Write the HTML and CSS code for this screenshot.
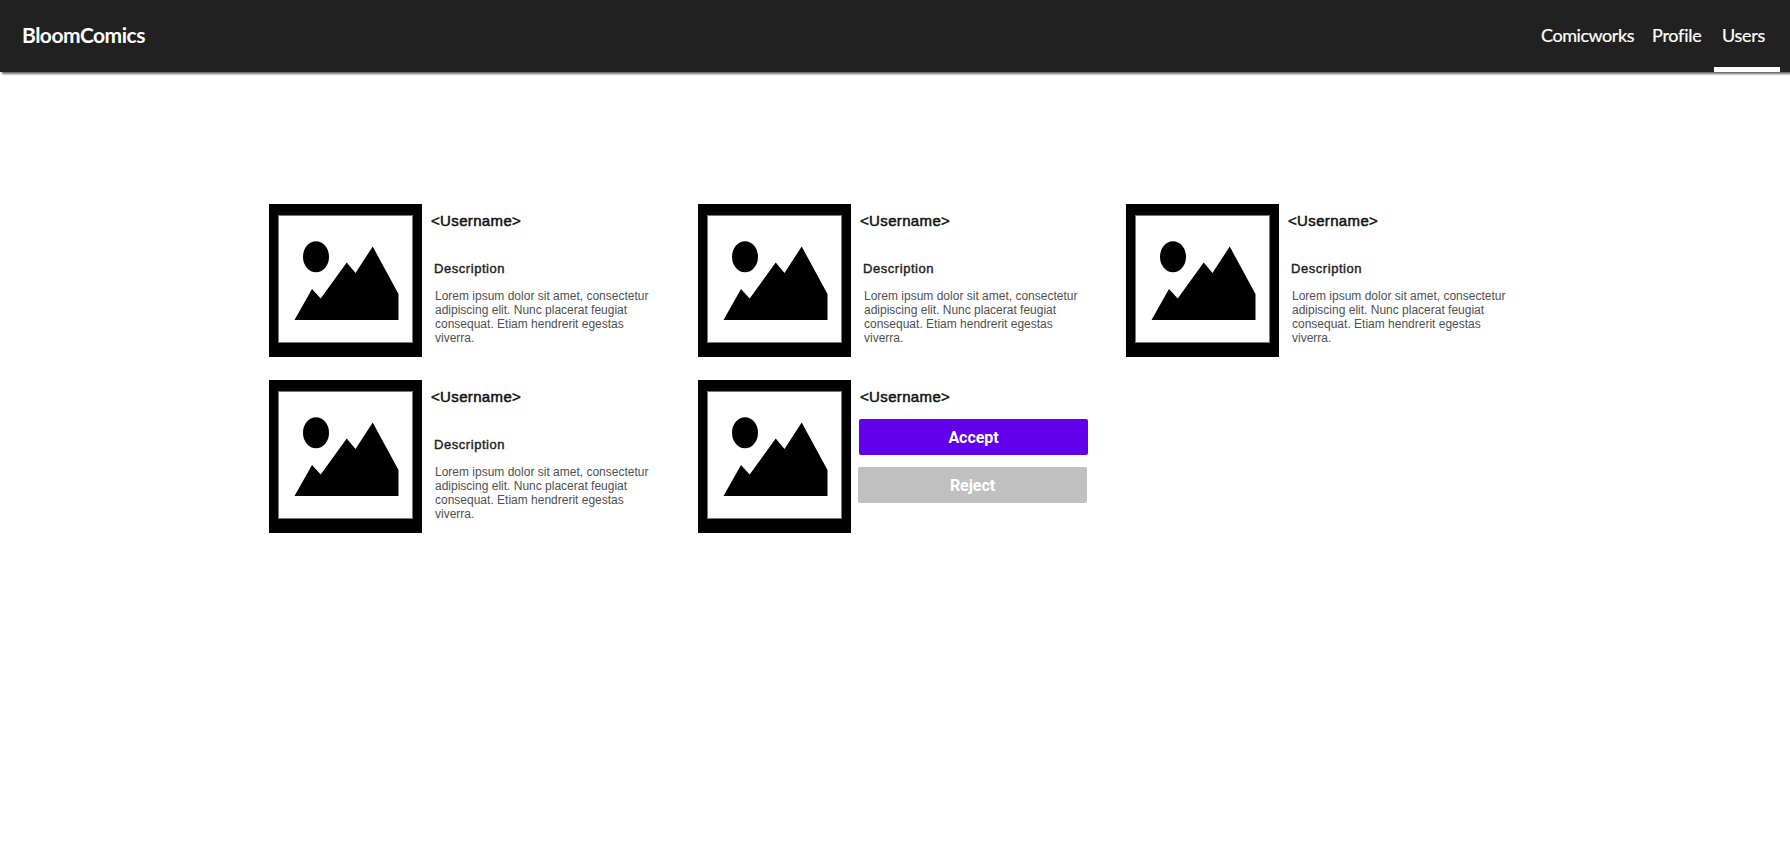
FILE: index.html
```html
<!DOCTYPE html>
<html lang="en">
<head>
<meta charset="utf-8">
<title>BloomComics</title>
<link rel="stylesheet" href="styles.css">
</head>
<body>
<svg width="0" height="0" class="defs">
  <symbol id="picture" viewBox="0 0 153 153">
    <rect width="153" height="153" fill="#000"/>
    <rect x="9.5" y="11.5" width="134" height="127" fill="#fff" stroke="#777"/>
    <ellipse cx="47" cy="52.7" rx="13" ry="15.5"/>
    <path d="M25.5 116 43 85 51.7 94.5 77.7 58.5 86.5 69 103.7 42.5 129.5 90V116Z"/>
  </symbol>
</svg>
<header class="topbar">
  <div class="logo">BloomComics</div>
  <nav class="nav">
    <a class="link works">Comicworks</a>
    <a class="link profile">Profile</a>
    <a class="link users active">Users</a>
  </nav>
</header>
<main class="grid">
  <article class="card">
    <svg class="thumb"><use href="#picture"/></svg>
    <div class="info">
      <h2 class="name">&lt;Username&gt;</h2>
      <h3 class="label">Description</h3>
      <p class="text">Lorem ipsum dolor sit amet, consectetur<br>adipiscing elit. Nunc placerat feugiat<br>consequat. Etiam hendrerit egestas<br>viverra.</p>
    </div>
  </article>
  <article class="card">
    <svg class="thumb"><use href="#picture"/></svg>
    <div class="info">
      <h2 class="name">&lt;Username&gt;</h2>
      <h3 class="label">Description</h3>
      <p class="text">Lorem ipsum dolor sit amet, consectetur<br>adipiscing elit. Nunc placerat feugiat<br>consequat. Etiam hendrerit egestas<br>viverra.</p>
    </div>
  </article>
  <article class="card">
    <svg class="thumb"><use href="#picture"/></svg>
    <div class="info">
      <h2 class="name">&lt;Username&gt;</h2>
      <h3 class="label">Description</h3>
      <p class="text">Lorem ipsum dolor sit amet, consectetur<br>adipiscing elit. Nunc placerat feugiat<br>consequat. Etiam hendrerit egestas<br>viverra.</p>
    </div>
  </article>
  <article class="card">
    <svg class="thumb"><use href="#picture"/></svg>
    <div class="info">
      <h2 class="name">&lt;Username&gt;</h2>
      <h3 class="label">Description</h3>
      <p class="text">Lorem ipsum dolor sit amet, consectetur<br>adipiscing elit. Nunc placerat feugiat<br>consequat. Etiam hendrerit egestas<br>viverra.</p>
    </div>
  </article>
  <article class="card">
    <svg class="thumb"><use href="#picture"/></svg>
    <div class="info">
      <h2 class="name">&lt;Username&gt;</h2>
      <button class="btn accept">Accept</button>
      <button class="btn reject">Reject</button>
    </div>
  </article>
</main>
</body>
</html>
```
FILE: styles.css
```css
* { box-sizing: border-box; }
body { margin: 0; background: #fff; font-family: "Liberation Sans", Arial, sans-serif; }
.defs { display: block; }
.topbar {
  display: flex; justify-content: space-between;
  height: 72px; padding: 0 10px 0 22px;
  background: #212121; color: #fff;
  box-shadow: 2px 2px 2px rgba(0, 0, 0, .6);
  font-family: Lato, sans-serif;
}
.logo { font-size: 21px; font-weight: 700; line-height: 70px; letter-spacing: -.5px; }
.nav { display: flex; }
.link { font-size: 18px; line-height: 71px; height: 72px; white-space: nowrap; letter-spacing: -.25px; font-variant-ligatures: common-ligatures; -webkit-text-stroke: .2px #fff; }
.works { width: 111px; letter-spacing: -.45px; }
.profile { width: 62px; }
.users { width: 66px; padding-left: 8px; }
.active { border-bottom: 5px solid #fff; }
.grid {
  display: grid; grid-template-columns: 429px 428px 428px; row-gap: 23px;
  padding: 132px 0 0 269px;
}
.card { display: flex; height: 153px; }
.thumb { width: 153px; height: 153px; flex: none; }
.info { display: flex; flex-direction: column; align-items: flex-start; padding: 6px 0 0 8px; }
.name { margin: 0 0 0 1px; font-size: 15px; font-weight: 400; line-height: 22px; letter-spacing: .35px; color: #111; -webkit-text-stroke: .5px #111; }
.label { margin: 27px 0 0 4px; font-size: 13px; font-weight: 400; line-height: 19px; letter-spacing: .55px; color: #222; -webkit-text-stroke: .4px #222; }
.text { margin: 11px 0 0 5px; font-size: 12px; line-height: 14px; color: #505050; white-space: nowrap; }
.btn {
  width: 229px; height: 36px; border: 0; border-radius: 2px; padding: 1px 0 0;
  color: #fff; font: 700 16px/35px Roboto, sans-serif;
}
.accept { margin: 11px 0 0; background: #6200ee; letter-spacing: -.05px; }
.reject { margin: 12px 0 0 -1px; background: #c0c0c0; letter-spacing: -.05px; }
```
